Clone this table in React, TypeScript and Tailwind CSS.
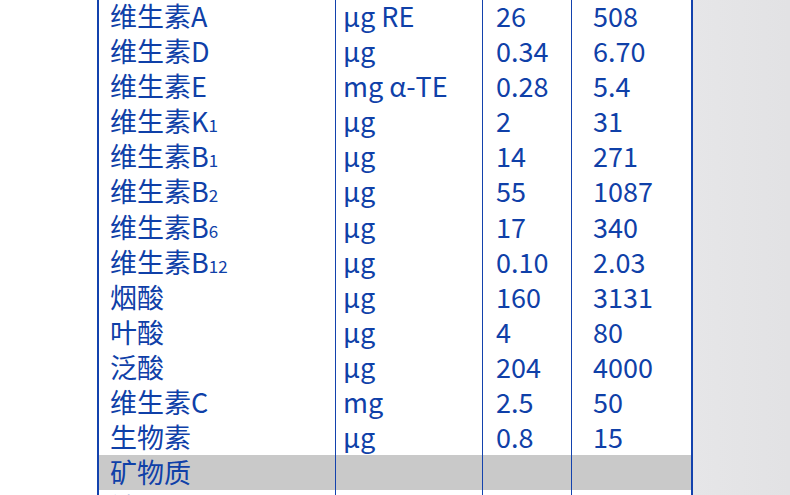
const rows: { name: string; sub?: string; unit: string; per100kj: string; per100g: string }[] = [
  { name: '维生素A', unit: 'μg RE', per100kj: '26', per100g: '508' },
  { name: '维生素D', unit: 'μg', per100kj: '0.34', per100g: '6.70' },
  { name: '维生素E', unit: 'mg α-TE', per100kj: '0.28', per100g: '5.4' },
  { name: '维生素K', sub: '1', unit: 'μg', per100kj: '2', per100g: '31' },
  { name: '维生素B', sub: '1', unit: 'μg', per100kj: '14', per100g: '271' },
  { name: '维生素B', sub: '2', unit: 'μg', per100kj: '55', per100g: '1087' },
  { name: '维生素B', sub: '6', unit: 'μg', per100kj: '17', per100g: '340' },
  { name: '维生素B', sub: '12', unit: 'μg', per100kj: '0.10', per100g: '2.03' },
  { name: '烟酸', unit: 'μg', per100kj: '160', per100g: '3131' },
  { name: '叶酸', unit: 'μg', per100kj: '4', per100g: '80' },
  { name: '泛酸', unit: 'μg', per100kj: '204', per100g: '4000' },
  { name: '维生素C', unit: 'mg', per100kj: '2.5', per100g: '50' },
  { name: '生物素', unit: 'μg', per100kj: '0.8', per100g: '15' },
];

function Row({ name, sub, unit, a, b, grey }: { name: string; sub?: string; unit: string; a: string; b: string; grey?: boolean }) {
  return (
    <div className={`flex h-[35.1px] shrink-0 leading-[33.1px] ${grey ? 'bg-[#c9c9c9]' : ''}`}>
      <div className="w-[237px] shrink-0 border-r border-[#1342ad] pl-[11px] whitespace-nowrap">
        {name}
        {sub && <span className="text-[17px] leading-none">{sub}</span>}
      </div>
      <div className="w-[147px] shrink-0 border-r border-[#1342ad] pl-[7px] whitespace-nowrap">{unit}</div>
      <div className="w-[89px] shrink-0 border-r border-[#1342ad] pl-[13px]">{a}</div>
      <div className="w-[119px] shrink-0 pl-[21px]">{b}</div>
    </div>
  );
}

export default function App() {
  return (
    <div className="flex h-[495px] w-[790px] overflow-hidden bg-white">
      <div className="w-[97px] shrink-0" />
      <div
        className="-mt-px flex w-[596px] shrink-0 flex-col border-x-2 border-[#1342ad] text-[27px] text-[#0f40a8]"
        style={{ fontFamily: '"Noto Sans CJK SC", "Noto Sans", sans-serif' }}
      >
        {rows.map((r, i) => (
          <Row key={i} name={r.name} sub={r.sub} unit={r.unit} a={r.per100kj} b={r.per100g} />
        ))}
        <Row name="矿物质" unit="" a="" b="" grey />
        <Row name="钠" unit="mg" a="5" b="100" />
      </div>
      <div className="flex-1 bg-gradient-to-r from-[#e6e6e8] to-[#e2e2e4]" />
    </div>
  );
}
